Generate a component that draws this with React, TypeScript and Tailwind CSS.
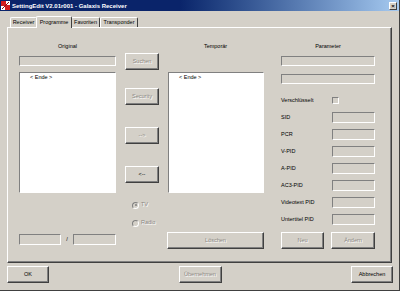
import React from "react";

const sunken = "border border-t-[#808080] border-l-[#808080] border-b-white border-r-white";
const raised =
  "border border-t-white border-l-white border-r-[#404040] border-b-[#404040] shadow-[inset_-1px_-1px_0_#808080]";
const disabledText = "text-[#8a8782] [text-shadow:1px_1px_0_#fff]";

function Btn({
  label,
  disabled,
  className = "",
}: {
  label: string;
  disabled?: boolean;
  className?: string;
}) {
  return (
    <div
      className={`${raised} h-[17px] flex items-center justify-center bg-[#d4d0c8] ${
        disabled ? disabledText : "text-black"
      } ${className}`}
    >
      {label}
    </div>
  );
}

function Field({ className = "", white }: { className?: string; white?: boolean }) {
  return <div className={`${sunken} ${white ? "bg-white" : "bg-[#d4d0c8]"} ${className}`} />;
}

function Tab({ label, w, active }: { label: string; w: string; active?: boolean }) {
  return (
    <div
      className={`${w} flex items-center justify-center border-t border-l border-r border-t-white border-l-white border-r-[#404040] rounded-t-[2px] bg-[#d4d0c8] ${
        active ? "h-[12px] -mb-[1px] relative z-10 -mx-[1px]" : "h-[10px]"
      }`}
    >
      {label}
    </div>
  );
}

function ParamRow({ label }: { label: string }) {
  return (
    <div className="flex items-center h-[11px] mt-[6px]">
      <span className="w-[51px]">{label}</span>
      <Field className="w-[43px] h-[11px]" />
    </div>
  );
}

export default function App() {
  return (
    <div
      className="w-[400px] h-[291px] bg-[#d4d0c8] flex flex-col overflow-hidden border-r border-b border-r-[#404040] border-b-[#404040] text-[5.5px] leading-none text-black"
      style={{ fontFamily: '"Liberation Sans", Arial, sans-serif' }}
    >
      {/* title bar */}
      <div className="h-[11px] flex items-center bg-gradient-to-r from-[#0a246a] from-45% to-[#a6caf0] pl-[1px] pr-[2px]">
        <svg width="9" height="9" viewBox="0 0 9 9">
          <rect width="9" height="9" fill="#fff" />
          <rect x="0" y="0" width="5" height="5" fill="#d21c1c" />
          <rect x="4" y="4" width="5" height="5" fill="#d21c1c" />
          <path d="M1 8 L8 1" stroke="#8a1010" strokeWidth="1" />
        </svg>
        <span className="ml-[2px] text-white font-bold text-[6px]">
          SettingEdit V2.01r001 - Galaxis Receiver
        </span>
        <div className="ml-auto w-[8px] h-[8px] bg-[#d4d0c8] border border-t-white border-l-white border-r-[#404040] border-b-[#404040] flex items-center justify-center text-[6px] font-bold">
          ×
        </div>
      </div>

      {/* tabs */}
      <div className="mt-[5px] flex items-end pl-[10px] h-[11px]">
        <Tab label="Receiver" w="w-[27px]" />
        <Tab label="Programme" w="w-[36px]" active />
        <Tab label="Favoriten" w="w-[29px]" />
        <Tab label="Transponder" w="w-[38px]" />
      </div>

      {/* panel */}
      <div className="mx-[7px] h-[236px] border border-t-white border-l-white border-r-[#404040] border-b-[#404040] shadow-[inset_-1px_-1px_0_#808080] flex pl-[11px]">
        {/* Original */}
        <div className="w-[97px] flex flex-col">
          <div className="mt-[15px] h-[8px] flex items-center justify-center">Original</div>
          <Field className="mt-[5px] h-[10px]" />
          <div className={`${sunken} bg-white mt-[6px] h-[121px] pl-[10px] pt-[2px]`}>&lt; Ende &gt;</div>
          <div className="mt-[41px] h-[11px] flex items-center">
            <Field className="w-[42px] h-[11px]" />
            <span className="w-[12px] text-center">/</span>
            <Field className="w-[43px] h-[11px]" />
          </div>
        </div>

        {/* buttons */}
        <div className="w-[34px] ml-[9px] flex flex-col">
          <Btn label="Suchen" disabled className="mt-[25px]" />
          <Btn label="Security" disabled className="mt-[18px]" />
          <Btn label="-->" disabled className="mt-[22px]" />
          <Btn label="<--" className="mt-[22px]" />
          <div className={`mt-[18px] h-[8px] flex items-center pl-[7px] ${disabledText}`}>
            <span className="w-[7px] h-[7px] rounded-full bg-[#d4d0c8] border border-t-[#808080] border-l-[#808080] border-b-white border-r-white flex items-center justify-center">
              <span className="w-[2px] h-[2px] rounded-full bg-[#808080]" />
            </span>
            <span className="ml-[2px]">TV</span>
          </div>
          <div className={`mt-[10px] h-[8px] flex items-center pl-[7px] ${disabledText}`}>
            <span className="w-[7px] h-[7px] rounded-full bg-[#d4d0c8] border border-t-[#808080] border-l-[#808080] border-b-white border-r-white" />
            <span className="ml-[2px]">Radio</span>
          </div>
        </div>

        {/* Temporär */}
        <div className="w-[97px] ml-[8px] flex flex-col">
          <div className="mt-[15px] h-[8px] flex items-center justify-center">Temporär</div>
          <div className={`${sunken} bg-white mt-[21px] h-[121px] ml-[1px] pl-[10px] pt-[2px]`}>&lt; Ende &gt;</div>
          <Btn label="Löschen" disabled className="mt-[39px]" />
        </div>

        {/* Parameter */}
        <div className="w-[94px] ml-[17px] flex flex-col">
          <div className="mt-[15px] h-[8px] flex items-center justify-center">Parameter</div>
          <Field className="mt-[5px] h-[10px]" />
          <Field className="mt-[8px] h-[10px]" />
          <div className="mt-[13px] h-[7px] flex items-center">
            <span className="w-[51px]">Verschlüsselt</span>
            <span className={`${sunken} w-[7px] h-[7px] bg-[#d4d0c8]`} />
          </div>
          <div className="-mt-[6px]" />
          <div className="mt-[8px]" />
          <ParamRow label="SID" />
          <ParamRow label="PCR" />
          <ParamRow label="V-PID" />
          <ParamRow label="A-PID" />
          <ParamRow label="AC3-PID" />
          <ParamRow label="Videotext PID" />
          <ParamRow label="Untertitel PID" />
          <div className="mt-[7px] flex justify-between">
            <Btn label="Neu" disabled className="w-[43px]" />
            <Btn label="Ändern" disabled className="w-[44px]" />
          </div>
        </div>
      </div>

      {/* bottom buttons */}
      <div className="mt-[3px] flex justify-between pl-[7px] pr-[6px]">
        <Btn label="OK" className="w-[42px]" />
        <Btn label="Übernehmen" disabled className="w-[43px]" />
        <Btn label="Abbrechen" className="w-[42px]" />
      </div>
    </div>
  );
}
